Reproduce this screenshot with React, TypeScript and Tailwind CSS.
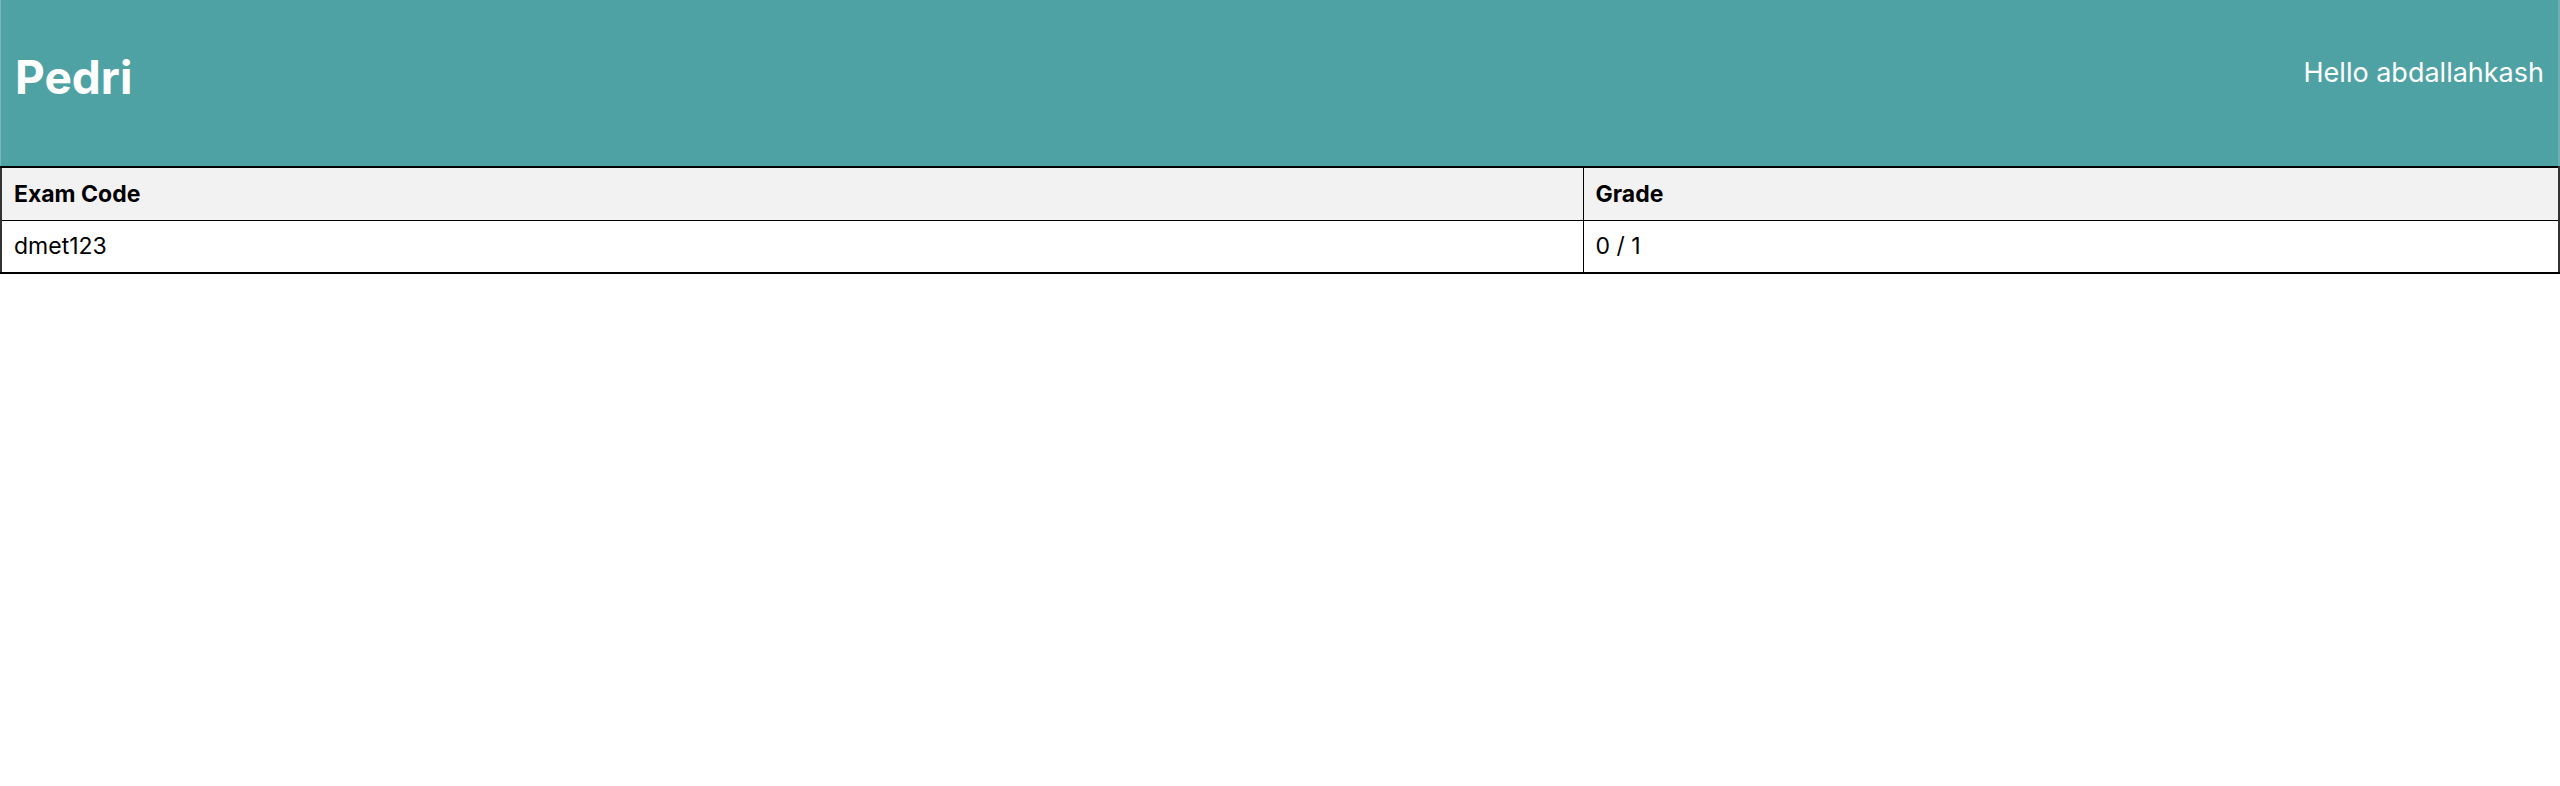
import React from 'react';

interface Result {
  examCode: string;
  grade: string;
}

const results: Result[] = [{ examCode: 'dmet123', grade: '0 / 1' }];

export default function App() {
  return (
    <div className="min-h-screen bg-white text-black" style={{ fontFamily: 'Inter, "Noto Sans", sans-serif' }}>
      <header className="h-[166px] bg-[#4fa2a4] border-l border-l-[#74b8ba] border-r-2 border-r-[#6aaeb0] flex items-center justify-between pl-[14px] pr-[14px] pb-3">
        <h1 className="text-[46px] font-bold text-white leading-none">Pedri</h1>
        <span className="text-[27px] text-white mb-2">Hello abdallahkash</span>
      </header>

      <table className="w-full border-collapse border-y-2 border-y-black border-x-2 border-x-[#333]">
        <thead>
          <tr className="bg-[#f2f2f2]">
            <th className="w-[1582px] h-[53px] px-3 text-left text-[23px] font-bold border-r border-black border-b">
              Exam Code
            </th>
            <th className="h-[53px] px-3 text-left text-[23px] font-bold border-b border-black">Grade</th>
          </tr>
        </thead>
        <tbody>
          {results.map((r, i) => (
            <tr key={i}>
              <td className="h-[53px] px-3 text-[23px] border-r border-black">{r.examCode}</td>
              <td className="h-[53px] px-3 text-[23px]">{r.grade}</td>
            </tr>
          ))}
        </tbody>
      </table>
    </div>
  );
}
